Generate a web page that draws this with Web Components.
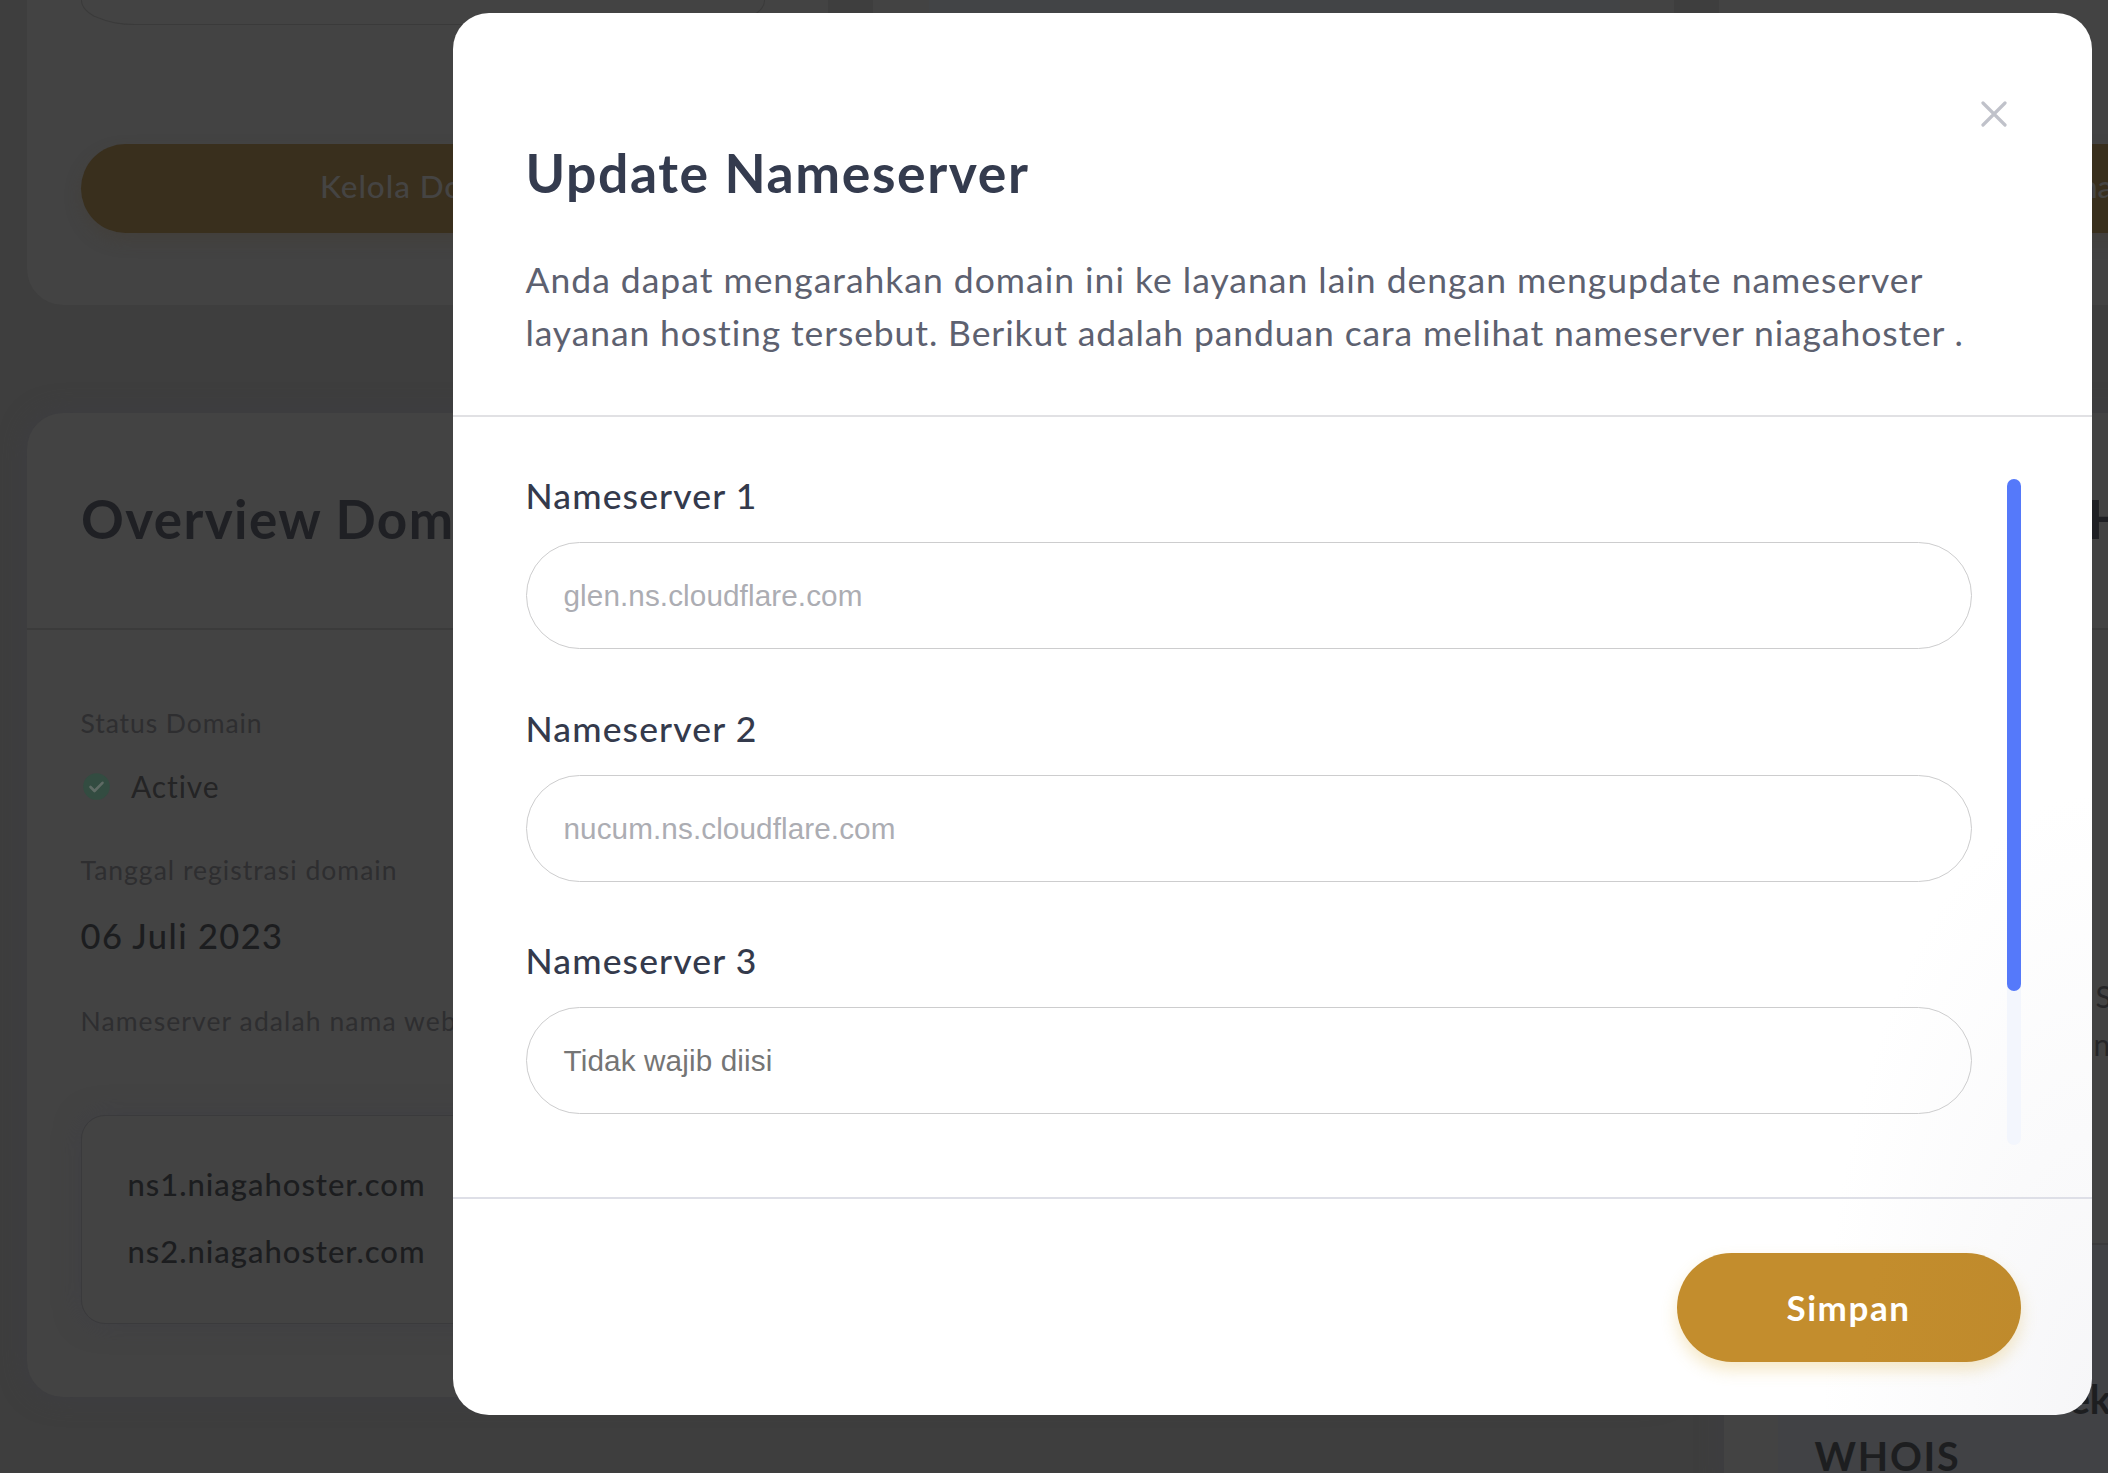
<!DOCTYPE html>
<html lang="id">
<head>
<meta charset="utf-8">
<title>Update Nameserver</title>
<style>
  html, body { margin: 0; height: 100%; overflow: hidden; background: #3e3e3e; }
  body { font-family: Lato, "Open Sans", sans-serif; }
</style>
</head>
<body>
<domain-page></domain-page>
<modal-overlay>
  <modal-dialog>
    <fit-text slot="title" w="504" size="53.5" lh="60" weight="700">Update Nameserver</fit-text>
    <fit-text slot="desc" w="1398" size="35.5" lh="53.3">Anda dapat mengarahkan domain ini ke layanan lain dengan mengupdate nameserver</fit-text>
    <fit-text slot="desc" w="1439" size="35.5" lh="53.3">layanan hosting tersebut. Berikut adalah panduan cara melihat nameserver niagahoster .</fit-text>
    <name-field label="Nameserver 1" value="glen.ns.cloudflare.com" w="299"></name-field>
    <name-field label="Nameserver 2" value="nucum.ns.cloudflare.com" w="332"></name-field>
    <name-field label="Nameserver 3" value="Tidak wajib diisi" w="209" hint></name-field>
    <pill-button slot="action"><fit-text w="124" size="35" lh="109" weight="700">Simpan</fit-text></pill-button>
  </modal-dialog>
</modal-overlay>

<script>
const define = (name, html, setup) => customElements.define(name, class extends HTMLElement {
  connectedCallback() {
    if (this.shadowRoot) return;
    const t = document.createElement('template');
    t.innerHTML = html;
    this.attachShadow({ mode: 'open' }).append(t.content.cloneNode(true));
    if (setup) setup(this, this.shadowRoot);
  }
});

/* One line of text tracked out to a given advance width. */
define('fit-text', `<style>:host{display:block;flex:none}span{display:inline-block;white-space:pre;vertical-align:top}</style><span><slot></slot></span>`, (el, root) => {
  const size = +el.getAttribute('size');
  el.style.fontSize = size + 'px';
  el.style.lineHeight = el.style.height = el.getAttribute('lh') + 'px';
  el.style.fontWeight = el.getAttribute('weight') || 400;
  const span = root.querySelector('span');
  const w = +el.getAttribute('w');
  if (w) {
    const n = el.textContent.length;
    span.style.letterSpacing = (w - span.getBoundingClientRect().width) / n + 'px';
  }
});

define('name-field', `
  <style>
    :host{display:flex;flex-direction:column;height:232.7px}
    .label{color:#343a4c}
    .box{box-sizing:border-box;height:107px;margin-top:19px;border:1px solid #cdcdce;border-radius:54px;
      padding-left:37px;color:#acadb3;font-family:"Liberation Sans",Arial,sans-serif}
    :host([hint]) .box{color:#757575}
  </style>
  <div class="label"></div><div class="box"></div>`, (el, root) => {
  root.querySelector('.label').innerHTML =
    `<fit-text w="232" size="35.5" lh="54" weight="500">${el.getAttribute('label')}</fit-text>`;
  root.querySelector('.box').innerHTML =
    `<fit-text w="${el.getAttribute('w')}" size="29.7" lh="105">${el.getAttribute('value')}</fit-text>`;
});

define('pill-button', `
  <style>:host{display:flex;justify-content:center;width:344px;height:108.5px;border-radius:55px;color:#fff;
    background:linear-gradient(100deg,#c38d2d 55%,#bf8a2c);box-shadow:0 8px 16px rgba(222,178,70,.3)}</style>
  <slot></slot>`);

define('close-icon', `
  <style>:host{display:block;width:26px;height:26px}svg{display:block}</style>
  <svg width="26" height="26" viewBox="0 0 26 26" fill="none" stroke="#c0c2ca" stroke-width="3.2" stroke-linecap="round"><path d="M2 2L24 24M24 2L2 24"/></svg>`);

define('scroll-track', `
  <style>:host{display:block;width:14px;height:666px;border-radius:7px;background:#f3f6fd}
    i{display:block;height:512px;border-radius:7px;background:#5579fa}</style><i></i>`);

define('modal-dialog', `
  <style>
    :host{display:flex;flex-direction:column;box-sizing:border-box;width:1639.5px;height:1402px;border-radius:36px;overflow:hidden;
      background:radial-gradient(ellipse 270px 620px at 100% 100%,#f6f6f8 0%,#fafafb 45%,#fff 100%) #fff}
    header{display:flex;flex-direction:column;box-sizing:border-box;height:404px;border-bottom:2px solid #e1e1e4;padding:0 72.5px 0 73px;color:#5d6170}
    .close{display:flex;justify-content:flex-end;padding:88px 13px 0 0}
    .title{color:#343b4e;margin-top:15px}
    .desc{margin-top:50.5px}
    main{display:flex;justify-content:space-between;box-sizing:border-box;height:782px;padding:0 71.5px 0 73px;border-bottom:2px solid #dedfe7}
    .fields{width:1446px;padding-top:52px}
    .scroll{padding-top:62px}
    footer{display:flex;justify-content:flex-end;padding:54px 71.5px 0 0}
  </style>
  <header>
    <div class="close"><close-icon></close-icon></div>
    <div class="title"><slot name="title"></slot></div>
    <div class="desc"><slot name="desc"></slot></div>
  </header>
  <main>
    <div class="fields"><slot></slot></div>
    <div class="scroll"><scroll-track></scroll-track></div>
  </main>
  <footer><slot name="action"></slot></footer>`);

define('modal-overlay', `
  <style>:host{position:absolute;inset:0;display:flex;justify-content:flex-end;box-sizing:border-box;padding:13px 16px 0 0}</style><slot></slot>`);

define('dim-card', `
  <style>:host{display:block;flex:none;box-sizing:border-box;background:#434343;border-radius:36px;box-shadow:0 0 26px rgba(61,61,68,.75)}</style><slot></slot>`);

define('check-icon', `
  <style>:host{display:block;width:27px;height:27px}svg{display:block}</style>
  <svg width="27" height="27" viewBox="0 0 27 27"><circle cx="13.5" cy="13.5" r="13.3" fill="#334c41"/>
  <path d="M7.5 14L11.5 18L19.5 9.8" fill="none" stroke="#5f6b65" stroke-width="2.6" stroke-linecap="round" stroke-linejoin="round"/></svg>`);

define('domain-page', `
  <style>
    :host{display:flex;flex-direction:column;width:2108px;height:1473px;overflow:hidden}
    .row{display:flex;flex:none;padding-left:27px}
    .top{height:305px;gap:45px;margin-bottom:108px}
    .top dim-card{height:305px;width:801px;border-radius:0 0 36px 36px;box-shadow:none;padding:0 54px}
    .pill{box-sizing:border-box;height:24.5px;border:1.5px solid #3a3a3a;border-top:0;border-radius:0 0 54px 54px / 0 0 24.5px 24.5px}
    .btn{height:89px;margin-top:119.5px;border-radius:45px;background:#392f1d;color:#454443;box-shadow:0 8px 16px rgba(66,60,52,.45);padding-left:239px}
    .shade{height:100%;margin:0 0 0 1.5px;background:#424446}
    .bottom{gap:44.5px}
    .ov{width:1652px;height:983.5px}
    .ov h2,.side h2{margin:0;height:217px;box-sizing:border-box;padding:73px 0 0 54px;border-bottom:2px solid #3b3b3b;color:#1f2024;font-weight:700}
    .body{padding-left:53.5px;display:flex;flex-direction:column}
    .dim{color:#2e2e30}
    .act{display:flex;align-items:center;gap:21.5px;color:#242425;padding-left:2px}
    .ns{box-sizing:border-box;width:1540px;height:209px;border:1.5px solid #3a3a3c;border-radius:24px;
      box-shadow:0 0 26px rgba(62,62,70,.6);color:#1c1d1f;padding:35px 0 0 46px;background:#434343}
    .side{width:800px;height:1100px}
    .side h2{padding-left:364px}
    .txt{height:615px;box-sizing:border-box;border-bottom:2px solid #3b3b3c;color:#262628;padding:342px 0 0 370px}
    .who{margin-left:54px;height:400px;background:#414245;padding:125px 0 0 37px;color:#1d1e20}
    .who .r{display:flex;padding-left:229px}
  </style>
  <div class="row top">
    <dim-card style="padding-right:61px"><div class="pill" style="margin-right:2px"></div><div class="btn"><fit-text w="214" size="31.5" lh="85" weight="500">Kelola Domain</fit-text></div></dim-card>
    <dim-card><div class="shade"></div></dim-card>
    <dim-card style="padding-right:61px"><div style="height:24.5px"></div><div class="btn" style="padding-left:307px"><fit-text size="31.5" lh="85" weight="500">na</fit-text></div></dim-card>
  </div>
  <div class="row bottom">
    <dim-card class="ov">
      <h2><fit-text w="448" size="53" lh="66" weight="700">Overview Domain</fit-text></h2>
      <div class="body">
        <fit-text class="dim" style="margin-top:72.5px" w="182" size="26.5" lh="40">Status Domain</fit-text>
        <div class="act" style="margin-top:19.5px"><check-icon></check-icon><fit-text w="89" size="30" lh="49">Active</fit-text></div>
        <fit-text class="dim" style="margin-top:39px" w="317" size="26.5" lh="40">Tanggal registrasi domain</fit-text>
        <fit-text style="margin-top:21px;color:#1c1d1f" w="203" size="34.5" lh="50" weight="500">06 Juli 2023</fit-text>
        <fit-text class="dim" style="margin-top:39.5px" w="422" size="26.5" lh="40">Nameserver adalah nama website</fit-text>
        <div class="ns" style="margin-top:74.5px">
          <fit-text w="298" size="31" lh="66.5" weight="500">ns1.niagahoster.com</fit-text>
          <fit-text w="298" size="31" lh="66.5" weight="500">ns2.niagahoster.com</fit-text>
        </div>
      </div>
    </dim-card>
    <dim-card class="side">
      <h2><fit-text size="53" lh="66" weight="700">H</fit-text></h2>
      <div class="txt"><fit-text style="margin-left:2px" size="30" lh="48">S</fit-text><fit-text size="30" lh="48">n</fit-text></div>
      <div class="who">
        <div class="r"><fit-text w="67" size="39.5" lh="57" weight="700">Cek</fit-text></div>
        <fit-text w="146" size="39.5" lh="57" weight="700">WHOIS</fit-text>
      </div>
    </dim-card>
  </div>`);
</script>
</body>
</html>
